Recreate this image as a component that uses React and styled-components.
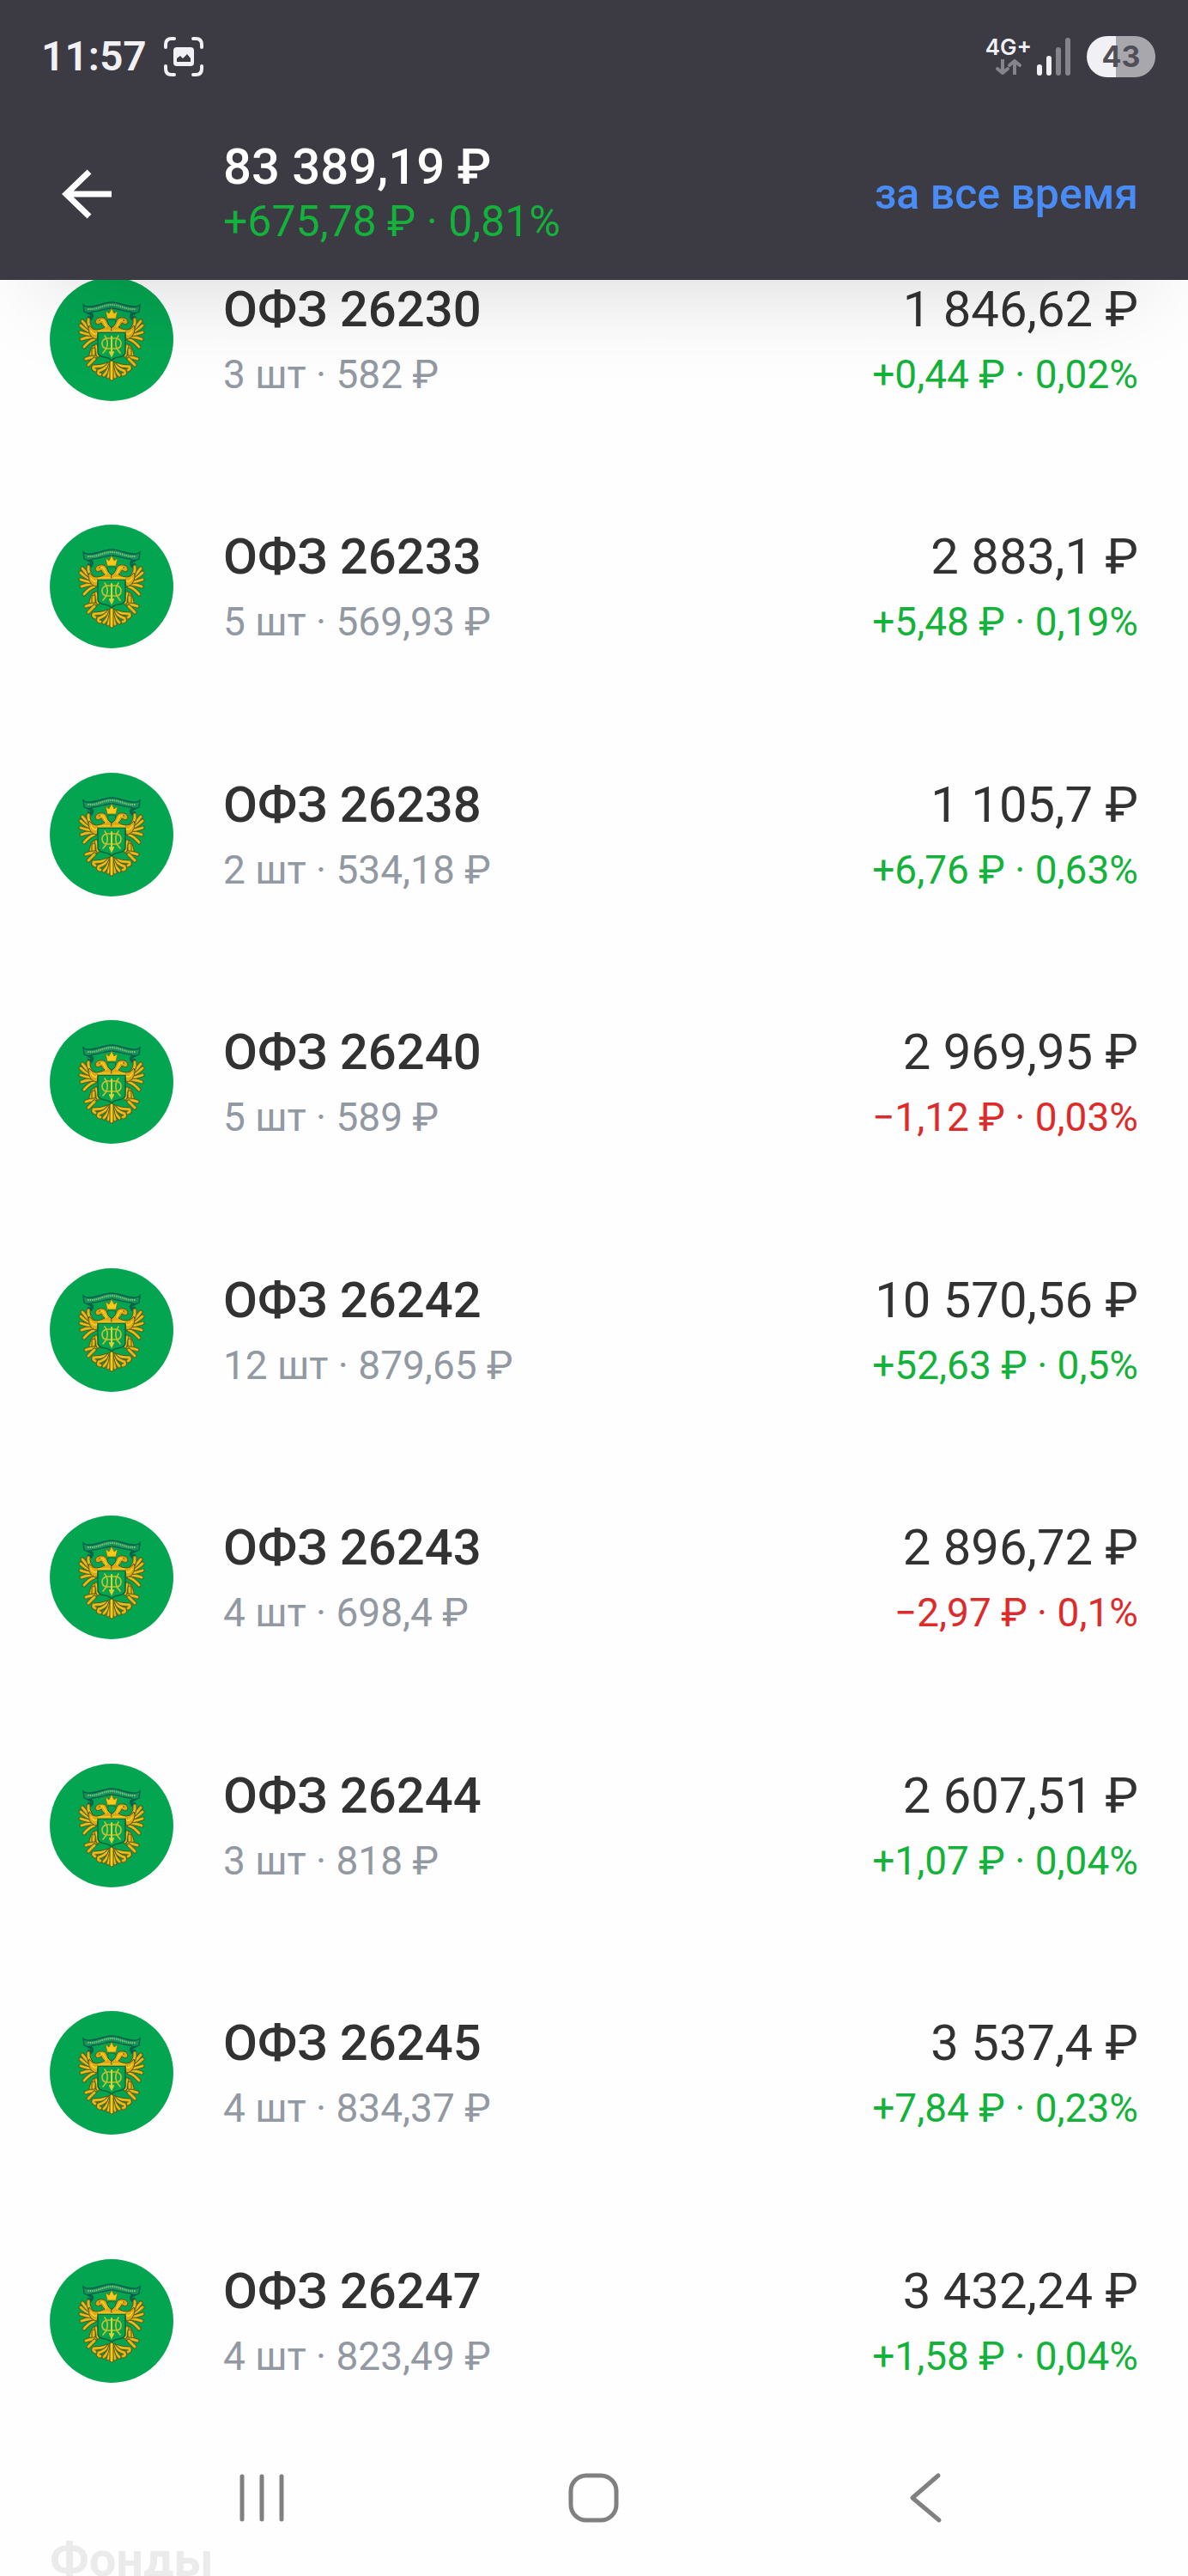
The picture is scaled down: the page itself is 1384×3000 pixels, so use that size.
import React from 'react';
import styled, { createGlobalStyle } from 'styled-components';

const GlobalStyle = createGlobalStyle`
  * {
    box-sizing: border-box;
  }
  body {
    margin: 0;
    background: #fefefe;
    font-family: Roboto, 'Noto Sans', sans-serif;
    color: #323232;
  }
`;

const Screen = styled.div`
  display: flex;
  flex-direction: column;
  height: 100vh;
  overflow: hidden;
`;

const TopBar = styled.header`
  flex: none;
  position: relative;
  z-index: 1;
  background: #3c3b44;
  box-shadow: 0 60px 120px -60px rgba(0, 0, 0, 0.17);
`;

const StatusBar = styled.div`
  display: flex;
  align-items: center;
  justify-content: space-between;
  height: 132px;
  padding: 0 38px 0 48px;
  color: #f1f1f5;
`;

const StatusGroup = styled.div`
  display: flex;
  align-items: center;
  gap: ${({ $gap }) => $gap}px;
`;

const Clock = styled.time`
  font: 600 48px/60px Roboto, sans-serif;
`;

const Network = styled.div`
  display: flex;
  flex-direction: column;
  align-items: center;
  gap: 4px;
  font: 600 26px/20px Inter, sans-serif;
`;

const Battery = styled.div`
  display: flex;
  align-items: center;
  justify-content: center;
  width: 80px;
  height: 48px;
  border-radius: 24px;
  background: linear-gradient(90deg, #f1f1f5 43%, #a8a8ac 43%);
  color: #504f57;
  font: 700 34px/48px Inter, sans-serif;
`;

const Summary = styled.div`
  display: flex;
  align-items: center;
  height: 194px;
  padding: 0 58px 6px 60px;
`;

const BackButton = styled.button`
  display: flex;
  width: 200px;
  padding: 0 0 0 12px;
  border: 0;
  background: none;
  color: #fff;
`;

const Totals = styled.div`
  flex: 1;
`;

const Total = styled.h1`
  margin: 0;
  color: #fff;
  font-weight: 500;
  font-size: 58px;
  line-height: 64px;
`;

const TotalChange = styled.p`
  margin: 0;
  color: #13b23b;
  font-size: 50px;
  line-height: 64px;
`;

const PeriodButton = styled.button`
  padding: 0;
  border: 0;
  background: none;
  color: #4a8cf5;
  font: 500 50px/60px Roboto, sans-serif;
`;

const List = styled.ul`
  flex: 1;
  display: flex;
  flex-direction: column;
  margin: -3px 0 0;
  padding: 0;
  list-style: none;
`;

const Row = styled.li`
  flex: 1;
  display: flex;
  align-items: flex-start;
  min-height: 200px;
  padding: 0 58px;
`;

const Logo = styled.svg`
  flex: none;
  width: 144px;
  height: 144px;
  margin-right: 58px;
`;

const Cell = styled.div`
  flex: ${({ $end }) => ($end ? 'none' : 1)};
  padding-top: 5px;
  text-align: ${({ $end }) => ($end ? 'right' : 'left')};
`;

const Name = styled.h2`
  margin: 0;
  font-weight: 500;
  font-size: 58px;
  line-height: 64px;
`;

const Value = styled.p`
  margin: 0;
  font-size: 58px;
  line-height: 64px;
`;

const tones = { up: '#13b23b', down: '#dd2b2b', muted: '#9299a2' };

const Details = styled.p`
  margin: 12px 0 0;
  color: ${({ $tone }) => tones[$tone]};
  font-size: 46px;
  line-height: 64px;
`;

const SectionTitle = styled.h2`
  flex: none;
  height: 81px;
  margin: 0;
  padding: 30px 58px 0;
  color: #ebebeb;
  font-weight: 700;
  font-size: 56px;
  line-height: 64px;
`;

const NavBar = styled.nav`
  position: fixed;
  right: 0;
  bottom: 0;
  left: 0;
  display: flex;
  justify-content: space-between;
  padding: 0 268px 57px;
`;

const NavButton = styled.button`
  display: flex;
  padding: 0;
  border: 0;
  background: none;
  color: #808080;
`;

const bonds = [
  { name: 'ОФЗ 26230', count: '3 шт · 582 ₽', value: '1 846,62 ₽', change: '+0,44 ₽ · 0,02%' },
  { name: 'ОФЗ 26233', count: '5 шт · 569,93 ₽', value: '2 883,1 ₽', change: '+5,48 ₽ · 0,19%' },
  { name: 'ОФЗ 26238', count: '2 шт · 534,18 ₽', value: '1 105,7 ₽', change: '+6,76 ₽ · 0,63%' },
  { name: 'ОФЗ 26240', count: '5 шт · 589 ₽', value: '2 969,95 ₽', change: '−1,12 ₽ · 0,03%' },
  { name: 'ОФЗ 26242', count: '12 шт · 879,65 ₽', value: '10 570,56 ₽', change: '+52,63 ₽ · 0,5%' },
  { name: 'ОФЗ 26243', count: '4 шт · 698,4 ₽', value: '2 896,72 ₽', change: '−2,97 ₽ · 0,1%' },
  { name: 'ОФЗ 26244', count: '3 шт · 818 ₽', value: '2 607,51 ₽', change: '+1,07 ₽ · 0,04%' },
  { name: 'ОФЗ 26245', count: '4 шт · 834,37 ₽', value: '3 537,4 ₽', change: '+7,84 ₽ · 0,23%' },
  { name: 'ОФЗ 26247', count: '4 шт · 823,49 ₽', value: '3 432,24 ₽', change: '+1,58 ₽ · 0,04%' },
];

// Feathers, leg and tail of the left half, drawn from the outside in
const plumes = [
  'M52 72 Q46 74 40 81',
  'M50 69 Q42 70 37 72',
  'M49 67 Q41 66 36 64',
  'M49 64 Q41 61 36 56',
  'M49 62 Q42 57 38 51',
  'M50 62 Q44 56 45 49',
  'M53 80 Q50 81 48 90',
  'M54 80 Q55 84 56 91',
  'M51 84 V90',
  'M53 93 Q47 93 42 95',
  'M52 95 L45 102',
  'M68 101 Q60 104 51 104 Q50 107 53 108',
  'M69 101 Q64 107 57 109 Q55 113 59 113',
  'M71 101 Q68 109 63 114',
  'M72 102 Q70 110 68 116',
];

// One half of the eagle, the other one is its mirror image
const EagleHalf = () => (
  <g fill="none" strokeLinecap="round" strokeLinejoin="round">
    {plumes.map(d => (
      <g key={d}>
        <path d={d} stroke="#475a1c" strokeWidth="5" />
        <path d={d} stroke="#c99f18" strokeWidth="3.4" />
        <path d={d} stroke="#f0c31b" strokeWidth="1.4" />
      </g>
    ))}
    <path
      d="M72 63 H57 L55 72 Q49 72 46 65 Q44 59 46 56 Q49 61 54 61 Q60 61 64 58 Q61 56 60 53 L56 55 L53 53 Q53 48 58 47 Q64 46 66 50 L69 56 L72 59 Z"
      fill="#dba817"
      stroke="#5a5a17"
      strokeWidth="1"
    />
    <path d="M48 62 Q51 67 54 66 L58 62 H70 M58 50 L62 50 L66 57" stroke="#f9cf22" strokeWidth="1.6" />
    <circle cx="58" cy="50" r="0.8" fill="#3e3f12" />
  </g>
);

const Emblem = () => (
  <Logo viewBox="0 0 144 144" role="img" aria-label="Минфин">
    <circle cx="72" cy="72" r="72" fill="#04a551" />
    <path d="M44 41 Q52 43 48 48 L44 46 M100 41 Q92 43 96 48 L100 46" fill="none" stroke="#07644a" strokeWidth="3.6" />
    <path d="M39 32 Q42 35 47 34 C57 34 62 29 72 29 C82 29 87 34 97 34 Q102 35 105 32 L104 40 Q99 43 94 40 C85 40 80 36 72 36 C64 36 59 40 50 40 Q45 43 40 40 Z" fill="#15945b" stroke="#08604a" strokeWidth="1.4" />
    <path d="M44 37 C56 38 62 32 72 32 C82 32 88 38 100 37" fill="none" stroke="#7dbd72" strokeWidth="2" strokeDasharray="1.6 0.8" />
    <EagleHalf />
    <g transform="matrix(-1 0 0 1 144 0)">
      <EagleHalf />
    </g>
    <path d="M67 48 L65 39 L69 42 L72 36 L75 42 L79 39 L77 48 Z" fill="#fac818" stroke="#6e6a15" strokeWidth="0.7" />
    <path d="M67 50 Q72 48 77 50 Q77 56 72 58 Q67 56 67 50 Z" fill="#04a551" stroke="#0b6b3c" strokeWidth="0.8" />
    <path d="M56 64 H88 V88 Q87 92 80 93 Q74 94 72 97 Q70 94 64 93 Q57 92 56 88 Z" fill="#04a551" stroke="#0b6338" strokeWidth="1.4" />
    <path d="M56 63 H88" stroke="#e6bd1d" strokeWidth="1.4" />
    <g fill="none" stroke="#c8c029" strokeWidth="1.7" strokeLinecap="round">
      <path d="M71 71 H67 Q61 72 61 77 Q61 83 67 83 H71 M73 71 H77 Q83 72 83 77 Q83 83 77 83 H73" />
      <path d="M64 68 Q69 74 66 83 L62 88 M80 68 Q75 74 78 83 L82 88" />
      <path d="M72 69 V90 M70 87 L72 91 L74 87" stroke="#e2cf2d" strokeWidth="2" />
    </g>
    <path d="M72 99 V118" stroke="#5a5a17" strokeWidth="5" strokeLinecap="round" />
    <path d="M72 99 V118" stroke="#f5cb1c" strokeWidth="3" strokeLinecap="round" />
  </Logo>
);

const BackArrow = () => (
  <svg width="58" height="58" viewBox="0 0 58 58" fill="none" stroke="currentColor" strokeWidth="7" aria-hidden="true">
    <path d="M32 3 L5 29 L32 55 M5 29 H58" />
  </svg>
);

const CaptureIcon = () => (
  <svg width="46" height="46" viewBox="0 0 46 46" fill="none" aria-hidden="true">
    <path
      d="M2 12 V9 Q2 2 9 2 H12 M34 2 H37 Q44 2 44 9 V12 M44 34 V37 Q44 44 37 44 H34 M12 44 H9 Q2 44 2 37 V34"
      stroke="currentColor"
      strokeWidth="4"
      strokeLinecap="round"
    />
    <rect x="11" y="12" width="24" height="22" rx="4" fill="currentColor" />
    <path d="M15 29 V25 L19 22 L22 25 L27 20 L31 25 V29 Z" fill="#3c3b44" />
  </svg>
);

const DataArrows = () => (
  <svg width="30" height="18" viewBox="0 0 30 18" fill="none" stroke="#85848c" strokeWidth="4" strokeLinecap="round" strokeLinejoin="round" aria-hidden="true">
    <path d="M8 1 V16 M2 11 L8 16 L14 11 M22 17 V2 M16 7 L22 2 L28 7" />
  </svg>
);

const SignalIcon = () => (
  <svg width="40" height="44" viewBox="0 0 40 44" aria-hidden="true">
    <rect x="0" y="31" width="6" height="13" rx="3" fill="#f1f1f5" />
    <rect x="11" y="21" width="6" height="23" rx="3" fill="#f1f1f5" />
    <rect x="22" y="11" width="6" height="33" rx="3" fill="#85848c" />
    <rect x="33" y="0" width="6" height="44" rx="3" fill="#85848c" />
  </svg>
);

export default function App() {
  return (
    <Screen>
      <GlobalStyle />
      <TopBar>
        <StatusBar>
          <StatusGroup $gap={20}>
            <Clock>11:57</Clock>
            <CaptureIcon />
          </StatusGroup>
          <StatusGroup $gap={18}>
            <StatusGroup $gap={6}>
              <Network>
                4G+
                <DataArrows />
              </Network>
              <SignalIcon />
            </StatusGroup>
            <Battery>43</Battery>
          </StatusGroup>
        </StatusBar>
        <Summary>
          <BackButton type="button" aria-label="Назад">
            <BackArrow />
          </BackButton>
          <Totals>
            <Total>83 389,19 ₽</Total>
            <TotalChange>+675,78 ₽ · 0,81%</TotalChange>
          </Totals>
          <PeriodButton type="button">за все время</PeriodButton>
        </Summary>
      </TopBar>
      <List>
        {bonds.map(({ name, count, value, change }) => (
          <Row key={name}>
            <Emblem />
            <Cell>
              <Name>{name}</Name>
              <Details $tone="muted">{count}</Details>
            </Cell>
            <Cell $end>
              <Value>{value}</Value>
              <Details $tone={change.startsWith('+') ? 'up' : 'down'}>{change}</Details>
            </Cell>
          </Row>
        ))}
      </List>
      <SectionTitle>Фонды</SectionTitle>
      <NavBar>
        <NavButton type="button" aria-label="Недавние">
          <svg width="72" height="68" viewBox="0 0 72 68" fill="none" stroke="currentColor" strokeWidth="5" strokeLinecap="round">
            <path d="M14 9 V59 M37 9 V59 M60 9 V59" />
          </svg>
        </NavButton>
        <NavButton type="button" aria-label="Домой">
          <svg width="72" height="68" viewBox="0 0 72 68" fill="none" stroke="currentColor" strokeWidth="5">
            <rect x="9" y="8" width="53" height="52" rx="18" />
          </svg>
        </NavButton>
        <NavButton type="button" aria-label="Назад">
          <svg width="72" height="68" viewBox="0 0 72 68" fill="none" stroke="currentColor" strokeWidth="5" strokeLinecap="round" strokeLinejoin="round">
            <path d="M49 8 L19 34 L50 60" />
          </svg>
        </NavButton>
      </NavBar>
    </Screen>
  );
}
